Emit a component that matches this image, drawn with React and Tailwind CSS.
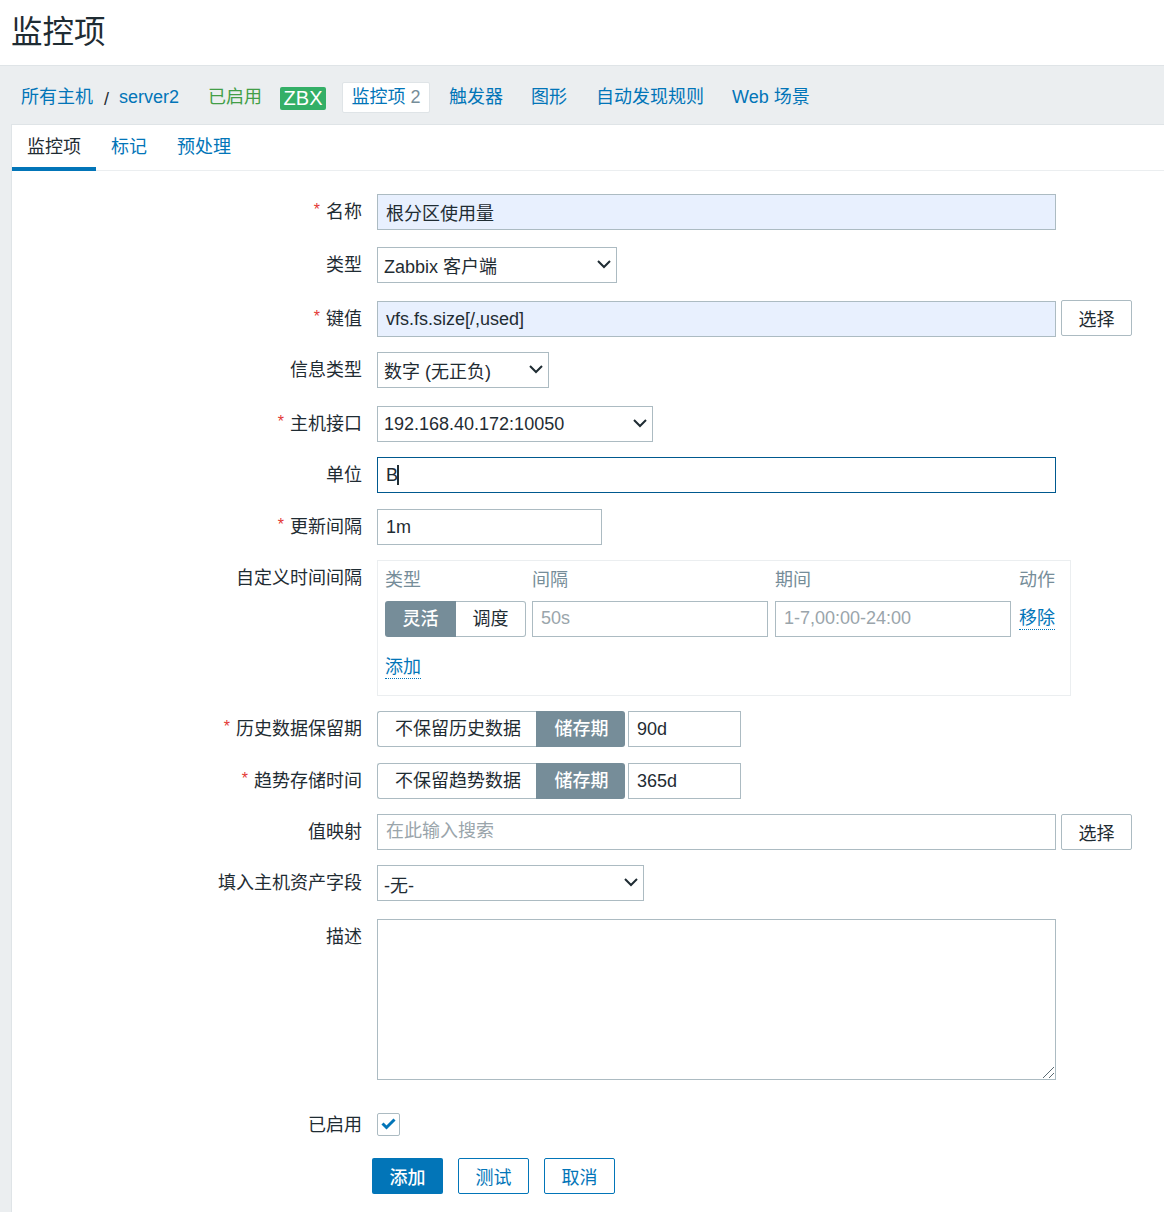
import React from 'react';

const font = { fontFamily: '"Liberation Sans", "Noto Sans CJK SC", sans-serif' };

const Chevron = () => (
  <svg width="16" height="16" viewBox="0 0 16 16" fill="none" className="shrink-0">
    <path d="M2 5l6 6 6-6" stroke="#1f2c33" strokeWidth="2" />
  </svg>
);

const Row = ({ label, required, className = '', children }) => (
  <div className={`flex ${className}`}>
    <div className="w-[350px] shrink-0 h-9 flex items-center justify-end text-[#1f2c33]">
      {required && <span className="text-[#e33734] text-base mr-[6px] -mt-1">*</span>}
      {label}
    </div>
    <div className="ml-[15px] min-w-0 flex-1">{children}</div>
  </div>
);

const Input = ({ value, className = '', children }) => (
  <div className={`h-9 border border-[#acbbc2] flex items-center pl-2 text-[#1f2c33] ${className}`}>
    {value}
    {children}
  </div>
);

const Select = ({ value, className = '', textClass = '' }) => (
  <div className={`h-9 border border-[#acbbc2] bg-white flex items-center justify-between pl-1.5 pr-1 text-[#1f2c33] ${className}`}>
    <span className={textClass}>{value}</span>
    <span className="-mt-0.5"><Chevron /></span>
  </div>
);

const SelectButton = ({ className = '' }) => (
  <button className={`h-9 w-[71px] ml-[5px] pt-1 border border-[#acbbc2] rounded-[2px] bg-white text-[#1f2c33] ${className}`}>选择</button>
);

const Segmented = ({ left, right, active, leftW, rightW }) => (
  <div className="flex h-9 shrink-0">
    <div className={`flex items-center justify-center rounded-l-[3px] ${leftW} ${active === 'left' ? 'bg-[#768d99] text-white font-medium' : 'border border-r-0 border-[#acbbc2] text-[#1f2c33] pl-0.5'}`}>{left}</div>
    <div className={`flex items-center justify-center rounded-r-[3px] ${rightW} ${active === 'right' ? 'bg-[#768d99] text-white font-medium pl-0.5' : 'border border-l-0 border-[#acbbc2] text-[#1f2c33]'}`}>{right}</div>
  </div>
);

const navLink = 'text-[#0275b8]';

export default function App() {
  return (
    <div style={font} className="min-h-[1212px] bg-[#ebeef0] text-[18px] leading-none overflow-hidden">
      <div className="h-[66px] bg-white border-b border-[#dfe4e7] pl-[11px] pt-3.5">
        <h1 className="text-[31.5px] leading-9 text-[#1f2c33]">监控项</h1>
      </div>

      <div className="h-[58px] flex items-center pl-[21px] pt-[3px]">
        <a className={navLink}>所有主机</a>
        <span className="ml-[11px] mr-[8px] mt-1 text-[#1f2c33]">/</span>
        <a className={navLink + ' ml-[2px]'}>server2</a>
        <span className="ml-[29px] text-[#429e47]">已启用</span>
        <span className="ml-[18px] mt-[3px] w-[46px] h-[23px] rounded-[2px] bg-[#34af67] text-white text-[20px] flex items-center justify-center">ZBX</span>
        <div className="ml-4 mt-px w-[88px] h-[31px] bg-white border border-[#dfe4e7] rounded-[2px] flex items-center justify-center">
          <a className={navLink}>监控项</a>
          <span className="ml-[5px] text-[#768d99]">2</span>
        </div>
        <a className={navLink + ' ml-[19px]'}>触发器</a>
        <a className={navLink + ' ml-7'}>图形</a>
        <a className={navLink + ' ml-[29px]'}>自动发现规则</a>
        <a className={navLink + ' ml-7'}>Web 场景</a>
      </div>

      <div className="ml-[11px] bg-white border-t border-l border-[#dfe4e7] pb-[18px]">
        <div className="h-[46px] flex border-b border-[#ebeef0]">
          <div className="w-[84px] h-[46px] border-b-4 border-[#0275b8] flex items-center justify-center pt-0.5 text-[#1f2c33]">监控项</div>
          <a className={navLink + ' ml-[15px] h-[46px] flex items-center pb-0.5'}>标记</a>
          <a className={navLink + ' ml-[30px] h-[46px] flex items-center pb-0.5'}>预处理</a>
        </div>

        <div className="pt-[23px]">
          <Row label="名称" required>
            <Input value="根分区使用量" className="w-[679px] bg-[#e8f0fe] pt-1" />
          </Row>
          <Row label="类型" className="mt-[17px]">
            <Select value="Zabbix 客户端" textClass="mt-1" className="w-[240px]" />
          </Row>
          <Row label="键值" required className="mt-[18px]">
            <div className="flex">
              <Input value="vfs.fs.size[/,used]" className="w-[679px] bg-[#e8f0fe]" />
              <SelectButton className="-mt-px" />
            </div>
          </Row>
          <Row label="信息类型" className="mt-[15px]">
            <Select value="数字 (无正负)" textClass="mt-1" className="w-[172px]" />
          </Row>
          <Row label="主机接口" required className="mt-[18px]">
            <Select value="192.168.40.172:10050" className="w-[276px]" />
          </Row>
          <Row label="单位" className="mt-[15px]">
            <Input value="B" className="w-[679px] !border-[#00598f]">
              <span className="inline-block w-0.5 h-5 -ml-px bg-[#1f2c33]" />
            </Input>
          </Row>
          <Row label="更新间隔" required className="mt-4">
            <Input value="1m" className="w-[225px]" />
          </Row>

          <Row label="自定义时间间隔" className="mt-[15px]">
            <div className="w-[694px] h-[136px] border border-[#ebeef0] pl-[7px] pt-2.5">
              <div className="flex text-[#768d99] h-[18px]">
                <span className="w-[147px]">类型</span>
                <span className="w-[243px]">间隔</span>
                <span className="w-[244px]">期间</span>
                <span>动作</span>
              </div>
              <div className="flex mt-3 items-start">
                <Segmented left="灵活" right="调度" active="left" leftW="w-[71px]" rightW="w-[70px]" />
                <Input value="50s" className="w-[236px] ml-1.5 pb-0.5 !text-[#9aa5ab]" />
                <Input value="1-7,00:00-24:00" className="w-[236px] ml-[7px] pb-0.5 !text-[#9aa5ab]" />
                <a className={navLink + ' ml-2 mt-2 pb-0.5 border-b border-dotted border-[#0275b8]'}>移除</a>
              </div>
              <a className={navLink + ' inline-block mt-[21px] pb-0.5 border-b border-dotted border-[#0275b8]'}>添加</a>
            </div>
          </Row>

          <Row label="历史数据保留期" required className="mt-[15px]">
            <div className="flex">
              <Segmented left="不保留历史数据" right="储存期" active="right" leftW="w-[159px]" rightW="w-[89px]" />
              <Input value="90d" className="w-[113px] ml-[3px]" />
            </div>
          </Row>
          <Row label="趋势存储时间" required className="mt-4">
            <div className="flex">
              <Segmented left="不保留趋势数据" right="储存期" active="right" leftW="w-[159px]" rightW="w-[89px]" />
              <Input value="365d" className="w-[113px] ml-[3px]" />
            </div>
          </Row>
          <Row label="值映射" className="mt-[15px]">
            <div className="flex">
              <Input value="在此输入搜索" className="w-[679px] pb-0.5 !text-[#9aa5ab]" />
              <SelectButton />
            </div>
          </Row>
          <Row label="填入主机资产字段" className="mt-[15px]">
            <Select value="-无-" textClass="mt-1.5" className="w-[267px]" />
          </Row>
          <Row label="描述" className="mt-[18px]">
            <div className="w-[679px] h-[161px] border border-[#acbbc2] flex items-end justify-end">
              <svg width="14" height="14" viewBox="0 0 14 14" stroke="#5a6a72" strokeWidth="1">
                <path d="M2 13L13 2M8 13l5-5" />
              </svg>
            </div>
          </Row>

          <Row label="已启用" className="mt-[27px]">
            <div className="h-9 flex items-center">
              <div className="w-[23px] h-[23px] -mt-0.5 border border-[#acbbc2] rounded-[2px] flex items-center justify-center">
                <svg width="15" height="12" viewBox="0 0 15 12" fill="none">
                  <path d="M1.5 5.5L5.5 9.5L13.5 1.5" stroke="#0275b8" strokeWidth="3" />
                </svg>
              </div>
            </div>
          </Row>

          <div className="flex mt-[15px] ml-[360px]">
            <button className="w-[71px] h-9 pt-1 bg-[#0275b8] text-white rounded-[2px] font-medium">添加</button>
            <button className="w-[71px] h-9 pt-1 ml-[15px] border border-[#0275b8] text-[#0275b8] rounded-[2px]">测试</button>
            <button className="w-[71px] h-9 pt-1 ml-[15px] border border-[#0275b8] text-[#0275b8] rounded-[2px]">取消</button>
          </div>
        </div>
      </div>
    </div>
  );
}
